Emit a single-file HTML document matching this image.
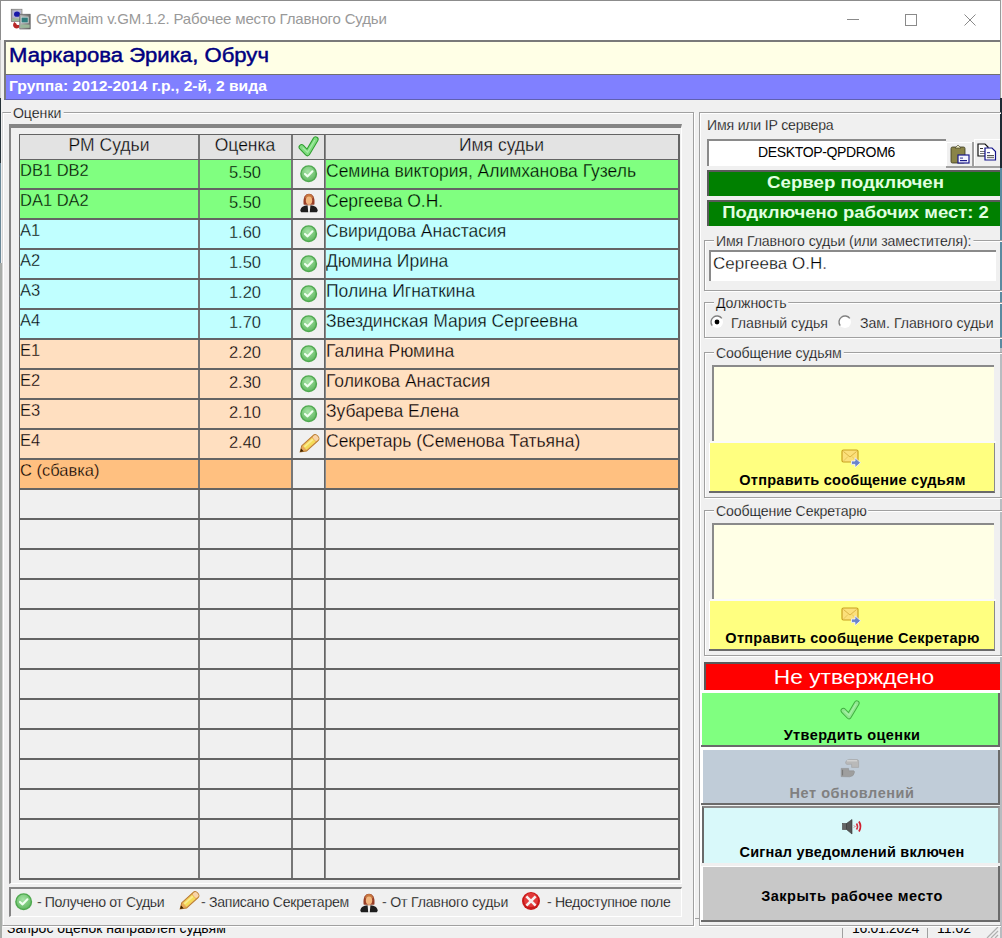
<!DOCTYPE html>
<html><head><meta charset="utf-8">
<style>
*{margin:0;padding:0;box-sizing:border-box}
html,body{width:1002px;height:938px;overflow:hidden;background:#f0f0f0;font-family:"Liberation Sans",sans-serif;color:#000}
.a{position:absolute}
.t{position:absolute;white-space:nowrap;line-height:1}
.c{position:absolute;white-space:nowrap;line-height:1;text-align:center}
svg{position:absolute;overflow:visible}
</style></head><body>
<div class="a" style="left:1000px;top:0px;width:1px;height:98px;background:#9a9a9a"></div>
<div class="a" style="left:1001px;top:0px;width:1px;height:98px;background:#f4f4f4"></div>
<div class="a" style="left:1000px;top:98px;width:2px;height:70px;background:#1e2a34"></div>
<div class="a" style="left:1000px;top:168px;width:2px;height:180px;background:#5a8aa0"></div>
<div class="a" style="left:1000px;top:348px;width:2px;height:590px;background:#b8bcc0"></div>
<div class="a" style="left:0px;top:98px;width:1px;height:65px;background:#263238"></div>
<div class="a" style="left:0px;top:163px;width:1px;height:100px;background:#6a8898"></div>
<div class="a" style="left:0px;top:263px;width:2px;height:675px;background:#a8aca8"></div>
<div class="a" style="left:0px;top:0px;width:1000px;height:40px;background:#fff;border-top:1px solid #8c8c8c;border-left:1px solid #8c8c8c"></div>
<svg style="left:8px;top:6px" width="26" height="26" viewBox="0 0 26 26"><defs><linearGradient id="tg1" x1="0" y1="0" x2="1" y2="0"><stop offset="0" stop-color="#9a9a9a"/><stop offset="1" stop-color="#c8c8c8"/></linearGradient><linearGradient id="tg2" x1="0" y1="0" x2="1" y2="0"><stop offset="0" stop-color="#b8b8b8"/><stop offset="1" stop-color="#6a6a6a"/></linearGradient></defs><rect x="3.2" y="3.2" width="10.8" height="12.4" fill="url(#tg1)" stroke="#707070" stroke-width="0.6"/><rect x="4.4" y="4.6" width="8.6" height="7" fill="#b4b4d4"/><ellipse cx="9" cy="8.2" rx="3" ry="2.6" fill="#1818a8"/><rect x="4" y="12.6" width="9.5" height="2.4" fill="#98b898"/><path d="M6.2 16 Q3.8 19.5 6.4 21.8 Q8.6 23.2 11.2 21.6 L11.2 18.8 Q8.8 19.8 8.2 17.6 Z" fill="#b82828"/><rect x="11.8" y="8.2" width="10.4" height="14.8" fill="url(#tg2)" stroke="#505050" stroke-width="0.6"/><rect x="13" y="10.6" width="7.6" height="6.6" fill="#d0d8d8"/><rect x="13.6" y="11.6" width="6.2" height="4.8" fill="#2e7c7c"/><rect x="12.4" y="18.6" width="9.2" height="3.2" fill="#9ab89a"/></svg>
<div class="t" style="left:36px;top:11px;font-size:15px;color:#999;letter-spacing:-0.17px">GymMaim v.GM.1.2. Рабочее место Главного Судьи</div>
<div class="a" style="left:847px;top:19px;width:12px;height:1px;background:#8a8a8a"></div>
<div class="a" style="left:905px;top:14px;width:12px;height:12px;border:1px solid #8a8a8a"></div>
<svg style="left:964px;top:14px" width="12" height="12"><path d="M0.5 0.5 L11.5 11.5 M11.5 0.5 L0.5 11.5" stroke="#8a8a8a" stroke-width="1"/></svg>
<div class="a" style="left:0px;top:40px;width:1px;height:58px;background:#c8c8c8"></div>
<div class="a" style="left:4px;top:40px;width:996px;height:35px;background:#ffffe6;border-top:2px solid #7a7a7a;border-left:2px solid #7a7a7a;border-bottom:1px solid #707070"></div>
<div class="t" style="left:9px;top:45px;font-size:20px;color:#000080;transform:scaleX(1.105);transform-origin:0 0;-webkit-text-stroke:0.45px #000080">Маркарова Эрика, Обруч</div>
<div class="a" style="left:4px;top:75px;width:996px;height:25px;background:#8080ff;border-left:2px solid #7a7a7a;border-bottom:1px solid #6060b0"></div>
<div class="t" style="left:9px;top:78.2px;font-size:15.5px;font-weight:bold;color:#fff;transform:scaleX(1.01);transform-origin:0 0">Группа: 2012-2014 г.р., 2-й, 2 вида</div>
<div class="a" style="left:2px;top:112px;width:692px;height:814px;border-top:1px solid #a0a0a0;border-left:1px solid #d4d4d4;border-right:1px solid #a0a0a0;border-bottom:1px solid #a0a0a0;box-shadow:inset 1px 1px 0 #fff, 1px 1px 0 #fff"></div>
<div class="t" style="left:11px;top:105.3px;font-size:15px;transform:scaleX(0.94);transform-origin:0 0;-webkit-text-stroke:0.25px #f0f0f0;background:#f0f0f0;padding:0 2px">Оценки</div>
<div class="a" style="left:9px;top:124px;width:673px;height:760px;border-top:4px solid #858585;border-left:2px solid #858585;border-right:1px solid #fff;border-bottom:1px solid #fff"></div>
<div class="a" style="left:19px;top:134px;width:661px;height:745px;background:#f0f0f0"></div>
<div class="a" style="left:19px;top:134px;width:660px;height:25px;background:#e3e3e3"></div>
<div class="a" style="left:19px;top:159px;width:272px;height:30px;background:#80ff80"></div>
<div class="a" style="left:324px;top:159px;width:355px;height:30px;background:#80ff80"></div>
<div class="a" style="left:19px;top:189px;width:272px;height:30px;background:#80ff80"></div>
<div class="a" style="left:324px;top:189px;width:355px;height:30px;background:#80ff80"></div>
<div class="a" style="left:19px;top:219px;width:272px;height:30px;background:#c0ffff"></div>
<div class="a" style="left:324px;top:219px;width:355px;height:30px;background:#c0ffff"></div>
<div class="a" style="left:19px;top:249px;width:272px;height:30px;background:#c0ffff"></div>
<div class="a" style="left:324px;top:249px;width:355px;height:30px;background:#c0ffff"></div>
<div class="a" style="left:19px;top:279px;width:272px;height:30px;background:#c0ffff"></div>
<div class="a" style="left:324px;top:279px;width:355px;height:30px;background:#c0ffff"></div>
<div class="a" style="left:19px;top:309px;width:272px;height:30px;background:#c0ffff"></div>
<div class="a" style="left:324px;top:309px;width:355px;height:30px;background:#c0ffff"></div>
<div class="a" style="left:19px;top:339px;width:272px;height:30px;background:#ffdfc0"></div>
<div class="a" style="left:324px;top:339px;width:355px;height:30px;background:#ffdfc0"></div>
<div class="a" style="left:19px;top:369px;width:272px;height:30px;background:#ffdfc0"></div>
<div class="a" style="left:324px;top:369px;width:355px;height:30px;background:#ffdfc0"></div>
<div class="a" style="left:19px;top:399px;width:272px;height:30px;background:#ffdfc0"></div>
<div class="a" style="left:324px;top:399px;width:355px;height:30px;background:#ffdfc0"></div>
<div class="a" style="left:19px;top:429px;width:272px;height:30px;background:#ffdfc0"></div>
<div class="a" style="left:324px;top:429px;width:355px;height:30px;background:#ffdfc0"></div>
<div class="a" style="left:19px;top:459px;width:272px;height:30px;background:#ffc080"></div>
<div class="a" style="left:324px;top:459px;width:355px;height:30px;background:#ffc080"></div>
<div class="a" style="left:19px;top:134px;width:1px;height:745px;background:#646464"></div>
<div class="a" style="left:198px;top:134px;width:2px;height:745px;background:#767676"></div>
<div class="a" style="left:291px;top:134px;width:2px;height:745px;background:#767676"></div>
<div class="a" style="left:324px;top:134px;width:1px;height:745px;background:#646464"></div>
<div class="a" style="left:325px;top:134px;width:1px;height:745px;background:#8a8a8a"></div>
<div class="a" style="left:678px;top:134px;width:2px;height:745px;background:#646464"></div>
<div class="a" style="left:19px;top:134px;width:661px;height:1px;background:#646464"></div>
<div class="a" style="left:19px;top:159px;width:661px;height:1px;background:#646464"></div>
<div class="a" style="left:19px;top:188px;width:661px;height:2px;background:#646464"></div>
<div class="a" style="left:19px;top:218px;width:661px;height:2px;background:#646464"></div>
<div class="a" style="left:19px;top:248px;width:661px;height:2px;background:#646464"></div>
<div class="a" style="left:19px;top:278px;width:661px;height:2px;background:#646464"></div>
<div class="a" style="left:19px;top:308px;width:661px;height:2px;background:#646464"></div>
<div class="a" style="left:19px;top:338px;width:661px;height:2px;background:#646464"></div>
<div class="a" style="left:19px;top:368px;width:661px;height:2px;background:#646464"></div>
<div class="a" style="left:19px;top:398px;width:661px;height:2px;background:#646464"></div>
<div class="a" style="left:19px;top:428px;width:661px;height:2px;background:#646464"></div>
<div class="a" style="left:19px;top:458px;width:661px;height:2px;background:#646464"></div>
<div class="a" style="left:19px;top:488px;width:661px;height:2px;background:#646464"></div>
<div class="a" style="left:19px;top:518px;width:661px;height:2px;background:#646464"></div>
<div class="a" style="left:19px;top:548px;width:661px;height:2px;background:#646464"></div>
<div class="a" style="left:19px;top:578px;width:661px;height:2px;background:#646464"></div>
<div class="a" style="left:19px;top:608px;width:661px;height:2px;background:#646464"></div>
<div class="a" style="left:19px;top:638px;width:661px;height:2px;background:#646464"></div>
<div class="a" style="left:19px;top:668px;width:661px;height:2px;background:#646464"></div>
<div class="a" style="left:19px;top:698px;width:661px;height:2px;background:#646464"></div>
<div class="a" style="left:19px;top:728px;width:661px;height:2px;background:#646464"></div>
<div class="a" style="left:19px;top:758px;width:661px;height:2px;background:#646464"></div>
<div class="a" style="left:19px;top:788px;width:661px;height:2px;background:#646464"></div>
<div class="a" style="left:19px;top:818px;width:661px;height:2px;background:#646464"></div>
<div class="a" style="left:19px;top:848px;width:661px;height:2px;background:#646464"></div>
<div class="a" style="left:19px;top:878px;width:661px;height:2px;background:#646464"></div>
<div class="c" style="left:19px;top:136.8px;width:180px;font-size:17.5px;-webkit-text-stroke:0.3px #e3e3e3">РМ Судьи</div>
<div class="c" style="left:199px;top:136.8px;width:92px;font-size:17.5px;-webkit-text-stroke:0.3px #e3e3e3">Оценка</div>
<div class="c" style="left:324px;top:136.8px;width:355px;font-size:17.5px;-webkit-text-stroke:0.3px #e3e3e3">Имя судьи</div>
<svg style="left:298px;top:136px" width="21" height="20" viewBox="0 0 21 20"><g transform="scale(1.0)"><path d="M3.6 11.2 L9.4 17.2 L17.6 3.4" fill="none" stroke="#2e9e2e" stroke-width="6" stroke-linecap="round" stroke-linejoin="round"/><path d="M3.6 11.2 L9.4 17.2 L17.6 3.4" fill="none" stroke="#7fdc7f" stroke-width="4" stroke-linecap="round" stroke-linejoin="round"/><path d="M5 12 L9.6 16.2 L16.6 4.5" fill="none" stroke="#b6f4b6" stroke-width="1.2" stroke-linecap="round" opacity="0.7"/></g></svg>
<div class="t" style="left:20px;top:162px;font-size:16.5px;color:#000000;-webkit-text-stroke:0.3px #80ff80">DB1 DB2</div>
<div class="c" style="left:199px;top:164px;width:92px;font-size:16.5px;color:#000000;-webkit-text-stroke:0.3px #80ff80">5.50</div>
<div class="t" style="left:326px;top:162.8px;font-size:17.5px;color:#000000;-webkit-text-stroke:0.3px #80ff80">Семина виктория, Алимханова Гузель</div>
<svg style="left:298.6409090909091px;top:163.8409090909091px" width="19.318181818181817" height="19.318181818181817" viewBox="0 0 20 20"><defs><radialGradient id="gok1" cx="45%" cy="35%" r="65%"><stop offset="0" stop-color="#a6e4a6"/><stop offset="1" stop-color="#66bb66"/></radialGradient></defs><circle cx="10" cy="10" r="8.8" fill="#4fa94f"/><circle cx="10" cy="10" r="7.3" fill="url(#gok1)"/><path d="M6.2 10.3 L8.9 12.8 L13.9 7.6" fill="none" stroke="#f0fff0" stroke-width="2.2" stroke-linecap="round" stroke-linejoin="round"/></svg>
<div class="t" style="left:20px;top:192px;font-size:16.5px;color:#000000;-webkit-text-stroke:0.3px #80ff80">DA1 DA2</div>
<div class="c" style="left:199px;top:194px;width:92px;font-size:16.5px;color:#000000;-webkit-text-stroke:0.3px #80ff80">5.50</div>
<div class="t" style="left:326px;top:192.8px;font-size:17.5px;color:#000000;-webkit-text-stroke:0.3px #80ff80">Сергеева О.Н.</div>
<svg style="left:299.5px;top:193px" width="18" height="20" viewBox="0 0 18 20"><path d="M3.6 11.5 C2.8 4 5.5 0.8 9 0.8 C12.5 0.8 15.2 4 14.4 11.5 C13 12 5 12 3.6 11.5 Z" fill="#9a4028"/><path d="M5 5.5 C5 2.5 7 0.9 9 0.9 C11 0.9 13 2.5 13 5.5 C11.5 4 6.5 4 5 5.5Z" fill="#c87840"/><ellipse cx="9" cy="7.6" rx="3.2" ry="4" fill="#f2b880"/><rect x="7.7" y="10.5" width="2.6" height="2.5" fill="#e4a070"/><path d="M0.3 17.8 C0.5 14.2 3.5 12.6 7.6 12.2 L8.2 19.2 L1.2 19.2Z" fill="#1e1e1e"/><path d="M17.7 17.8 C17.5 14.2 14.5 12.6 10.4 12.2 L9.8 19.2 L16.8 19.2Z" fill="#1e1e1e"/><path d="M7.8 12.6 L10.2 12.6 L9.6 17.5 L8.4 17.5Z" fill="#f0f0f0"/></svg>
<div class="t" style="left:20px;top:222px;font-size:16.5px;color:#000000;-webkit-text-stroke:0.3px #c0ffff">A1</div>
<div class="c" style="left:199px;top:224px;width:92px;font-size:16.5px;color:#000000;-webkit-text-stroke:0.3px #c0ffff">1.60</div>
<div class="t" style="left:326px;top:222.8px;font-size:17.5px;color:#000000;-webkit-text-stroke:0.3px #c0ffff">Свиридова Анастасия</div>
<svg style="left:298.6409090909091px;top:223.8409090909091px" width="19.318181818181817" height="19.318181818181817" viewBox="0 0 20 20"><defs><radialGradient id="gok2" cx="45%" cy="35%" r="65%"><stop offset="0" stop-color="#a6e4a6"/><stop offset="1" stop-color="#66bb66"/></radialGradient></defs><circle cx="10" cy="10" r="8.8" fill="#4fa94f"/><circle cx="10" cy="10" r="7.3" fill="url(#gok2)"/><path d="M6.2 10.3 L8.9 12.8 L13.9 7.6" fill="none" stroke="#f0fff0" stroke-width="2.2" stroke-linecap="round" stroke-linejoin="round"/></svg>
<div class="t" style="left:20px;top:252px;font-size:16.5px;color:#000000;-webkit-text-stroke:0.3px #c0ffff">A2</div>
<div class="c" style="left:199px;top:254px;width:92px;font-size:16.5px;color:#000000;-webkit-text-stroke:0.3px #c0ffff">1.50</div>
<div class="t" style="left:326px;top:252.8px;font-size:17.5px;color:#000000;-webkit-text-stroke:0.3px #c0ffff">Дюмина Ирина</div>
<svg style="left:298.6409090909091px;top:253.8409090909091px" width="19.318181818181817" height="19.318181818181817" viewBox="0 0 20 20"><defs><radialGradient id="gok3" cx="45%" cy="35%" r="65%"><stop offset="0" stop-color="#a6e4a6"/><stop offset="1" stop-color="#66bb66"/></radialGradient></defs><circle cx="10" cy="10" r="8.8" fill="#4fa94f"/><circle cx="10" cy="10" r="7.3" fill="url(#gok3)"/><path d="M6.2 10.3 L8.9 12.8 L13.9 7.6" fill="none" stroke="#f0fff0" stroke-width="2.2" stroke-linecap="round" stroke-linejoin="round"/></svg>
<div class="t" style="left:20px;top:282px;font-size:16.5px;color:#000000;-webkit-text-stroke:0.3px #c0ffff">A3</div>
<div class="c" style="left:199px;top:284px;width:92px;font-size:16.5px;color:#000000;-webkit-text-stroke:0.3px #c0ffff">1.20</div>
<div class="t" style="left:326px;top:282.8px;font-size:17.5px;color:#000000;-webkit-text-stroke:0.3px #c0ffff">Полина Игнаткина</div>
<svg style="left:298.6409090909091px;top:283.84090909090907px" width="19.318181818181817" height="19.318181818181817" viewBox="0 0 20 20"><defs><radialGradient id="gok4" cx="45%" cy="35%" r="65%"><stop offset="0" stop-color="#a6e4a6"/><stop offset="1" stop-color="#66bb66"/></radialGradient></defs><circle cx="10" cy="10" r="8.8" fill="#4fa94f"/><circle cx="10" cy="10" r="7.3" fill="url(#gok4)"/><path d="M6.2 10.3 L8.9 12.8 L13.9 7.6" fill="none" stroke="#f0fff0" stroke-width="2.2" stroke-linecap="round" stroke-linejoin="round"/></svg>
<div class="t" style="left:20px;top:312px;font-size:16.5px;color:#000000;-webkit-text-stroke:0.3px #c0ffff">A4</div>
<div class="c" style="left:199px;top:314px;width:92px;font-size:16.5px;color:#000000;-webkit-text-stroke:0.3px #c0ffff">1.70</div>
<div class="t" style="left:326px;top:312.8px;font-size:17.5px;color:#000000;-webkit-text-stroke:0.3px #c0ffff">Звездинская Мария Сергеевна</div>
<svg style="left:298.6409090909091px;top:313.84090909090907px" width="19.318181818181817" height="19.318181818181817" viewBox="0 0 20 20"><defs><radialGradient id="gok5" cx="45%" cy="35%" r="65%"><stop offset="0" stop-color="#a6e4a6"/><stop offset="1" stop-color="#66bb66"/></radialGradient></defs><circle cx="10" cy="10" r="8.8" fill="#4fa94f"/><circle cx="10" cy="10" r="7.3" fill="url(#gok5)"/><path d="M6.2 10.3 L8.9 12.8 L13.9 7.6" fill="none" stroke="#f0fff0" stroke-width="2.2" stroke-linecap="round" stroke-linejoin="round"/></svg>
<div class="t" style="left:20px;top:342px;font-size:16.5px;color:#000000;-webkit-text-stroke:0.3px #ffdfc0">E1</div>
<div class="c" style="left:199px;top:344px;width:92px;font-size:16.5px;color:#000000;-webkit-text-stroke:0.3px #ffdfc0">2.20</div>
<div class="t" style="left:326px;top:342.8px;font-size:17.5px;color:#000000;-webkit-text-stroke:0.3px #ffdfc0">Галина Рюмина</div>
<svg style="left:298.6409090909091px;top:343.84090909090907px" width="19.318181818181817" height="19.318181818181817" viewBox="0 0 20 20"><defs><radialGradient id="gok6" cx="45%" cy="35%" r="65%"><stop offset="0" stop-color="#a6e4a6"/><stop offset="1" stop-color="#66bb66"/></radialGradient></defs><circle cx="10" cy="10" r="8.8" fill="#4fa94f"/><circle cx="10" cy="10" r="7.3" fill="url(#gok6)"/><path d="M6.2 10.3 L8.9 12.8 L13.9 7.6" fill="none" stroke="#f0fff0" stroke-width="2.2" stroke-linecap="round" stroke-linejoin="round"/></svg>
<div class="t" style="left:20px;top:372px;font-size:16.5px;color:#000000;-webkit-text-stroke:0.3px #ffdfc0">E2</div>
<div class="c" style="left:199px;top:374px;width:92px;font-size:16.5px;color:#000000;-webkit-text-stroke:0.3px #ffdfc0">2.30</div>
<div class="t" style="left:326px;top:372.8px;font-size:17.5px;color:#000000;-webkit-text-stroke:0.3px #ffdfc0">Голикова Анастасия</div>
<svg style="left:298.6409090909091px;top:373.84090909090907px" width="19.318181818181817" height="19.318181818181817" viewBox="0 0 20 20"><defs><radialGradient id="gok7" cx="45%" cy="35%" r="65%"><stop offset="0" stop-color="#a6e4a6"/><stop offset="1" stop-color="#66bb66"/></radialGradient></defs><circle cx="10" cy="10" r="8.8" fill="#4fa94f"/><circle cx="10" cy="10" r="7.3" fill="url(#gok7)"/><path d="M6.2 10.3 L8.9 12.8 L13.9 7.6" fill="none" stroke="#f0fff0" stroke-width="2.2" stroke-linecap="round" stroke-linejoin="round"/></svg>
<div class="t" style="left:20px;top:402px;font-size:16.5px;color:#000000;-webkit-text-stroke:0.3px #ffdfc0">E3</div>
<div class="c" style="left:199px;top:404px;width:92px;font-size:16.5px;color:#000000;-webkit-text-stroke:0.3px #ffdfc0">2.10</div>
<div class="t" style="left:326px;top:402.8px;font-size:17.5px;color:#000000;-webkit-text-stroke:0.3px #ffdfc0">Зубарева Елена</div>
<svg style="left:298.6409090909091px;top:403.84090909090907px" width="19.318181818181817" height="19.318181818181817" viewBox="0 0 20 20"><defs><radialGradient id="gok8" cx="45%" cy="35%" r="65%"><stop offset="0" stop-color="#a6e4a6"/><stop offset="1" stop-color="#66bb66"/></radialGradient></defs><circle cx="10" cy="10" r="8.8" fill="#4fa94f"/><circle cx="10" cy="10" r="7.3" fill="url(#gok8)"/><path d="M6.2 10.3 L8.9 12.8 L13.9 7.6" fill="none" stroke="#f0fff0" stroke-width="2.2" stroke-linecap="round" stroke-linejoin="round"/></svg>
<div class="t" style="left:20px;top:432px;font-size:16.5px;color:#000000;-webkit-text-stroke:0.3px #ffdfc0">E4</div>
<div class="c" style="left:199px;top:434px;width:92px;font-size:16.5px;color:#000000;-webkit-text-stroke:0.3px #ffdfc0">2.40</div>
<div class="t" style="left:326px;top:432.8px;font-size:17.5px;color:#000000;-webkit-text-stroke:0.3px #ffdfc0">Секретарь (Семенова Татьяна)</div>
<svg style="left:297.2px;top:431.9px" width="24" height="24" viewBox="0 0 20 20"><g transform="rotate(-42 10 10)"><path d="M0 10 L4.6 7 L17.2 7 Q19.8 7 19.8 10 Q19.8 13 17.2 13 L4.6 13 Z" fill="#e8aa5c" stroke="#b87c30" stroke-width="0.8"/><rect x="5.2" y="7.8" width="10.2" height="4.4" fill="#f4dc58"/><rect x="5.6" y="8.5" width="9.4" height="1.4" fill="#faf0a0" opacity="0.8"/><path d="M0 10 L2.6 8.4 L2.6 11.6Z" fill="#3a2000"/><rect x="15.8" y="7.6" width="3.6" height="4.8" rx="1.4" fill="#f8d4a8"/></g></svg>
<div class="t" style="left:20px;top:462px;font-size:16.5px;color:#000000;-webkit-text-stroke:0.3px #ffc080">C (сбавка)</div>
<div class="c" style="left:199px;top:464px;width:92px;font-size:16.5px;color:#000000;-webkit-text-stroke:0.3px #ffc080"></div>
<div class="t" style="left:326px;top:462.8px;font-size:17.5px;color:#000000;-webkit-text-stroke:0.3px #ffc080"></div>
<div class="a" style="left:9px;top:887px;width:673px;height:30px;border-top:2px solid #858585;border-left:2px solid #858585;border-right:1px solid #fff;border-bottom:1px solid #fff"></div>
<svg style="left:13.840909090909092px;top:891.8409090909091px" width="19.318181818181817" height="19.318181818181817" viewBox="0 0 20 20"><defs><radialGradient id="gok9" cx="45%" cy="35%" r="65%"><stop offset="0" stop-color="#a6e4a6"/><stop offset="1" stop-color="#66bb66"/></radialGradient></defs><circle cx="10" cy="10" r="8.8" fill="#4fa94f"/><circle cx="10" cy="10" r="7.3" fill="url(#gok9)"/><path d="M6.2 10.3 L8.9 12.8 L13.9 7.6" fill="none" stroke="#f0fff0" stroke-width="2.2" stroke-linecap="round" stroke-linejoin="round"/></svg>
<div class="t" style="left:37px;top:894.3px;font-size:15px;transform:scaleX(0.94);transform-origin:0 0;-webkit-text-stroke:0.25px #f0f0f0;letter-spacing:-0.4px">- Получено от Судьи</div>
<svg style="left:177.2px;top:889.3px" width="24" height="24" viewBox="0 0 20 20"><g transform="rotate(-42 10 10)"><path d="M0 10 L4.6 7 L17.2 7 Q19.8 7 19.8 10 Q19.8 13 17.2 13 L4.6 13 Z" fill="#e8aa5c" stroke="#b87c30" stroke-width="0.8"/><rect x="5.2" y="7.8" width="10.2" height="4.4" fill="#f4dc58"/><rect x="5.6" y="8.5" width="9.4" height="1.4" fill="#faf0a0" opacity="0.8"/><path d="M0 10 L2.6 8.4 L2.6 11.6Z" fill="#3a2000"/><rect x="15.8" y="7.6" width="3.6" height="4.8" rx="1.4" fill="#f8d4a8"/></g></svg>
<div class="t" style="left:201px;top:894.3px;font-size:15px;transform:scaleX(0.94);transform-origin:0 0;-webkit-text-stroke:0.25px #f0f0f0;letter-spacing:-0.3px">- Записано Секретарем</div>
<svg style="left:359.5px;top:892.5px" width="18" height="20" viewBox="0 0 18 20"><path d="M3.6 11.5 C2.8 4 5.5 0.8 9 0.8 C12.5 0.8 15.2 4 14.4 11.5 C13 12 5 12 3.6 11.5 Z" fill="#9a4028"/><path d="M5 5.5 C5 2.5 7 0.9 9 0.9 C11 0.9 13 2.5 13 5.5 C11.5 4 6.5 4 5 5.5Z" fill="#c87840"/><ellipse cx="9" cy="7.6" rx="3.2" ry="4" fill="#f2b880"/><rect x="7.7" y="10.5" width="2.6" height="2.5" fill="#e4a070"/><path d="M0.3 17.8 C0.5 14.2 3.5 12.6 7.6 12.2 L8.2 19.2 L1.2 19.2Z" fill="#1e1e1e"/><path d="M17.7 17.8 C17.5 14.2 14.5 12.6 10.4 12.2 L9.8 19.2 L16.8 19.2Z" fill="#1e1e1e"/><path d="M7.8 12.6 L10.2 12.6 L9.6 17.5 L8.4 17.5Z" fill="#f0f0f0"/></svg>
<div class="t" style="left:382px;top:894.3px;font-size:15px;transform:scaleX(0.94);transform-origin:0 0;-webkit-text-stroke:0.25px #f0f0f0;letter-spacing:-0.2px">- От Главного судьи</div>
<svg style="left:521.0px;top:891.4px" width="20.0" height="20.0" viewBox="0 0 20 20"><circle cx="10" cy="10" r="9" fill="#c81818"/><circle cx="10" cy="9" r="7" fill="#e23a3a"/><path d="M6.3 6.3 L13.7 13.7 M13.7 6.3 L6.3 13.7" stroke="#f6f0f0" stroke-width="2.6" stroke-linecap="square"/></svg>
<div class="t" style="left:547px;top:894.3px;font-size:15px;transform:scaleX(0.94);transform-origin:0 0;-webkit-text-stroke:0.25px #f0f0f0;letter-spacing:-0.35px">- Недоступное поле</div>
<div class="a" style="left:1px;top:928px;width:999px;height:10px;overflow:hidden"><div class="t" style="left:6px;top:-7px;font-size:14px">Запрос оценок направлен судьям</div><div class="t" style="left:851px;top:-7px;font-size:14px;letter-spacing:-0.3px">16.01.2024</div><div class="t" style="left:936px;top:-7px;font-size:14px">11:02</div><div class="a" style="left:841px;top:0;width:1px;height:11px;background:#a0a0a0"></div><div class="a" style="left:926px;top:0;width:1px;height:11px;background:#a0a0a0"></div></div>
<svg style="left:985px;top:926px" width="14" height="12"><path d="M13 1 L2 12 M13 5 L6 12 M13 9 L10 12" stroke="#b0b0b0" stroke-width="1.2"/></svg>
<div class="a" style="left:699px;top:112px;width:302px;height:814px;border-top:1px solid #a0a0a0;border-left:1px solid #a0a0a0;border-bottom:1px solid #a0a0a0;box-shadow:inset 1px 1px 0 #fff, 0 1px 0 #fff"></div>
<div class="a" style="left:695px;top:918px;width:4px;height:1px;background:#a0a0a0"></div>
<div class="t" style="left:707px;top:117.3px;font-size:15px;transform:scaleX(0.94);transform-origin:0 0;-webkit-text-stroke:0.25px #f0f0f0;letter-spacing:-0.2px">Имя или IP сервера</div>
<div class="a" style="left:707px;top:139px;width:239px;height:27px;background:#fff;border-top:2px solid #8a8a8a;border-left:2px solid #8a8a8a"></div>
<div class="c" style="left:707px;top:145px;width:239px;font-size:14px;letter-spacing:-0.35px">DESKTOP-QPDROM6</div>
<div class="a" style="left:946px;top:142px;width:28px;height:26px;background:#f0f0f0;border-right:2px solid #a0a0a0;border-bottom:2px solid #a0a0a0;box-shadow:inset 1px 1px 0 #fff"></div>
<svg style="left:950px;top:144px" width="20" height="20" viewBox="0 0 20 20"><rect x="1" y="3" width="14" height="16" rx="1.5" fill="#8a8448" stroke="#3a3820" stroke-width="0.8"/><path d="M5 4 L8 1 L11 4 Z" fill="#f0eec8" stroke="#3a3820" stroke-width="0.6"/><rect x="8" y="11" width="11" height="8" fill="#f4f4ff" stroke="#1a1a8a" stroke-width="1.2"/><rect x="10" y="13.5" width="3" height="1.2" fill="#5050a0"/><rect x="10" y="16" width="7" height="1.2" fill="#1a1a8a"/></svg>
<div class="a" style="left:974px;top:139px;width:26px;height:29px;background:#f0f0f0;border-bottom:2px solid #a0a0a0;box-shadow:inset 1px 1px 0 #fff"></div>
<svg style="left:977px;top:143px" width="20" height="19" viewBox="0 0 20 19"><path d="M1 1 L8 1 L11 4 L11 13 L1 13 Z" fill="#fff" stroke="#111" stroke-width="1.2"/><rect x="3" y="5" width="3" height="1" fill="#333"/><rect x="3" y="8" width="6" height="1" fill="#777"/><rect x="3" y="10" width="6" height="1" fill="#777"/><path d="M8 5 L15 5 L18.5 8.5 L18.5 17 L8 17 Z" fill="#fff" stroke="#10108a" stroke-width="1.2"/><rect x="10" y="9" width="3" height="1.2" fill="#5050a0"/><rect x="10" y="12" width="7" height="1.2" fill="#555"/><rect x="10" y="14" width="7" height="1.2" fill="#777"/></svg>
<div class="a" style="left:707px;top:170px;width:293px;height:26px;background:#008000;border-top:2px solid #5a5a5a;border-left:2px solid #5a5a5a"></div>
<div class="c" style="left:709px;top:175px;width:293px;font-size:16px;font-weight:bold;color:#e0ffe0;transform:scaleX(1.166)">Сервер подключен</div>
<div class="a" style="left:707px;top:200px;width:293px;height:26px;background:#008000;border-top:2px solid #5a5a5a;border-left:2px solid #5a5a5a"></div>
<div class="c" style="left:709px;top:205px;width:293px;font-size:16px;font-weight:bold;color:#e0ffe0;transform:scaleX(1.154)">Подключено рабочих мест: 2</div>
<div class="a" style="left:704px;top:240px;width:300px;height:51px;border:1px solid #a0a0a0;box-shadow:inset 1px 1px 0 #fff, 1px 1px 0 #fff"></div>
<div class="t" style="left:714px;top:233.3px;font-size:15px;transform:scaleX(0.94);transform-origin:0 0;-webkit-text-stroke:0.25px #f0f0f0;background:#f0f0f0;padding:0 2px;letter-spacing:-0.1px">Имя Главного судьи (или заместителя):</div>
<div class="a" style="left:709px;top:250px;width:287px;height:31px;background:#fff;border-top:2px solid #8a8a8a;border-left:2px solid #8a8a8a"></div>
<div class="t" style="left:713px;top:255px;font-size:17px;-webkit-text-stroke:0.3px #fff">Сергеева О.Н.</div>
<div class="a" style="left:704px;top:302px;width:300px;height:36px;border:1px solid #a0a0a0;box-shadow:inset 1px 1px 0 #fff, 1px 1px 0 #fff"></div>
<div class="t" style="left:714px;top:295.3px;font-size:15px;transform:scaleX(0.94);transform-origin:0 0;-webkit-text-stroke:0.25px #f0f0f0;background:#f0f0f0;padding:0 2px;letter-spacing:-0.1px">Должность</div>
<svg style="left:710.2px;top:315.4px" width="14" height="14" viewBox="0 0 14 14"><circle cx="7" cy="7" r="6" fill="#fff"/><path d="M2.2 10.6 A6 6 0 0 1 11.8 3.4" fill="none" stroke="#808080" stroke-width="1.4"/><circle cx="7" cy="7" r="2.4" fill="#000"/></svg>
<div class="t" style="left:731px;top:314.6px;font-size:15px;transform:scaleX(0.94);transform-origin:0 0;-webkit-text-stroke:0.25px #f0f0f0">Главный судья</div>
<svg style="left:837.8px;top:315.2px" width="14" height="14" viewBox="0 0 14 14"><circle cx="7" cy="7" r="6" fill="#fff"/><path d="M2.2 10.6 A6 6 0 0 1 11.8 3.4" fill="none" stroke="#808080" stroke-width="1.4"/></svg>
<div class="t" style="left:860px;top:314.6px;font-size:15px;transform:scaleX(0.94);transform-origin:0 0;-webkit-text-stroke:0.25px #f0f0f0">Зам. Главного судьи</div>
<div class="a" style="left:704px;top:352px;width:300px;height:146px;border:1px solid #a0a0a0;box-shadow:inset 1px 1px 0 #fff, 1px 1px 0 #fff"></div>
<div class="t" style="left:714px;top:345.3px;font-size:15px;transform:scaleX(0.94);transform-origin:0 0;-webkit-text-stroke:0.25px #f0f0f0;background:#f0f0f0;padding:0 2px;letter-spacing:-0.1px">Сообщение судьям</div>
<div class="a" style="left:712px;top:365px;width:282px;height:76px;background:#ffffe6;border-top:2px solid #8a8a8a;border-left:2px solid #8a8a8a"></div>
<div class="a" style="left:710px;top:441px;width:286px;height:2px;background:#fafafa"></div>
<div class="a" style="left:709px;top:443px;width:286px;height:50px;background:#ffff80;border-bottom:2px solid #6a6a6a;border-right:1px solid #8a8a8a;box-shadow:inset 1px 0 0 #fff"></div>
<svg style="left:841px;top:449px" width="20" height="18" viewBox="0 0 20 18"><rect x="1" y="1" width="16" height="12" rx="1.5" fill="#fce07a" stroke="#c8a020" stroke-width="1.2"/><path d="M2.5 2.5 L9 8 L15.5 2.5" fill="none" stroke="#d0a838" stroke-width="0.8"/><path d="M2.5 12 L7 7.5 M15.5 12 L11 7.5" fill="none" stroke="#d8b848" stroke-width="0.6"/><path d="M10.5 12 L14 12 L14 8.8 L19.5 13.7 L14 18.6 L14 15.4 L10.5 15.4 Z" fill="#6a84cc" stroke="#f8f8ff" stroke-width="0.8"/></svg>
<div class="c" style="left:710px;top:473px;width:285px;font-size:14.5px;font-weight:bold;letter-spacing:0.25px">Отправить сообщение судьям</div>
<div class="a" style="left:704px;top:510px;width:300px;height:146px;border:1px solid #a0a0a0;box-shadow:inset 1px 1px 0 #fff, 1px 1px 0 #fff"></div>
<div class="t" style="left:714px;top:503.3px;font-size:15px;transform:scaleX(0.94);transform-origin:0 0;-webkit-text-stroke:0.25px #f0f0f0;background:#f0f0f0;padding:0 2px;letter-spacing:-0.1px">Сообщение Секретарю</div>
<div class="a" style="left:712px;top:523px;width:282px;height:76px;background:#ffffe6;border-top:2px solid #8a8a8a;border-left:2px solid #8a8a8a"></div>
<div class="a" style="left:710px;top:599px;width:286px;height:2px;background:#fafafa"></div>
<div class="a" style="left:709px;top:601px;width:286px;height:50px;background:#ffff80;border-bottom:2px solid #6a6a6a;border-right:1px solid #8a8a8a;box-shadow:inset 1px 0 0 #fff"></div>
<svg style="left:841px;top:607px" width="20" height="18" viewBox="0 0 20 18"><rect x="1" y="1" width="16" height="12" rx="1.5" fill="#fce07a" stroke="#c8a020" stroke-width="1.2"/><path d="M2.5 2.5 L9 8 L15.5 2.5" fill="none" stroke="#d0a838" stroke-width="0.8"/><path d="M2.5 12 L7 7.5 M15.5 12 L11 7.5" fill="none" stroke="#d8b848" stroke-width="0.6"/><path d="M10.5 12 L14 12 L14 8.8 L19.5 13.7 L14 18.6 L14 15.4 L10.5 15.4 Z" fill="#6a84cc" stroke="#f8f8ff" stroke-width="0.8"/></svg>
<div class="c" style="left:710px;top:631px;width:285px;font-size:14.5px;font-weight:bold;letter-spacing:0.3px">Отправить сообщение Секретарю</div>
<div class="a" style="left:704px;top:662px;width:296px;height:29px;background:#ff0000;border-top:2px solid #5a5a5a;border-left:2px solid #5a5a5a"></div>
<div class="c" style="left:706px;top:667px;width:296px;font-size:20px;color:#fff;transform:scaleX(1.135)">Не утверждено</div>
<div class="a" style="left:701px;top:690px;width:299px;height:3px;background:#fff"></div>
<div class="a" style="left:701px;top:693px;width:299px;height:54px;background:#80ff80;border-bottom:2px solid #6a6a6a;border-right:2px solid #6a6a6a;box-shadow:inset 1px 0 0 #fff"></div>
<svg style="left:840px;top:700px" width="20" height="20" viewBox="0 0 20 20"><g transform="scale(0.9523809523809523)"><path d="M3.6 11.2 L9.4 17.2 L17.6 3.4" fill="none" stroke="#3fae3f" stroke-width="6" stroke-linecap="round" stroke-linejoin="round"/><path d="M3.6 11.2 L9.4 17.2 L17.6 3.4" fill="none" stroke="#8ee88e" stroke-width="4" stroke-linecap="round" stroke-linejoin="round"/><path d="M5 12 L9.6 16.2 L16.6 4.5" fill="none" stroke="#b6f4b6" stroke-width="1.2" stroke-linecap="round" opacity="0.7"/></g></svg>
<div class="c" style="left:704px;top:728px;width:296px;font-size:14.5px;font-weight:bold;letter-spacing:0.4px">Утвердить оценки</div>
<div class="a" style="left:701px;top:747px;width:299px;height:3px;background:#fff"></div>
<div class="a" style="left:701px;top:750px;width:299px;height:55px;background:#c0ccd8;border-bottom:2px solid #6a6a6a;border-right:2px solid #6a6a6a;box-shadow:inset 2px 0 0 #fff"></div>
<svg style="left:836px;top:754px" width="28" height="28" viewBox="0 0 28 28"><path d="M9.6 8 Q10.5 5.6 13.5 5.4 L21.2 5.6 Q22.6 5.8 22.6 7.4 L22.6 13.4 L15.6 13.4 L15.6 10.2 L11 10.4 Q9.4 10.2 9.6 8 Z" fill="#b9b9b9" stroke="#9c9c9c" stroke-width="0.5"/><path d="M11 6.8 L21 6.8" stroke="#dcdcdc" stroke-width="1"/><path d="M5.2 14.4 L12.6 14.4 L12.8 16.8 L17.8 16.8 Q18.6 17 18.4 18.6 Q17.8 22.6 13.6 22.8 L5.2 22.6 Z" fill="#9e9e9e" stroke="#888" stroke-width="0.5"/><path d="M6.6 15.8 L6.6 21.4" stroke="#777" stroke-width="1"/></svg>
<div class="c" style="left:704px;top:786px;width:296px;font-size:14.5px;font-weight:bold;color:#808080;letter-spacing:0.55px">Нет обновлений</div>
<div class="a" style="left:702px;top:806px;width:298px;height:57px;background:#d9f9fa;border-left:2px solid #6a6a6a;border-top:2px solid #8a8a8a;border-right:2px solid #a0a0a0;box-shadow:-2px 0 0 #fff"></div>
<svg style="left:842px;top:819px" width="21" height="16" viewBox="0 0 21 16"><rect x="0.5" y="4.5" width="4" height="6" fill="#666" stroke="#444" stroke-width="0.6"/><path d="M4.5 4.5 L10 0.5 L10 15 L4.5 10.5 Z" fill="#555" stroke="#333" stroke-width="0.6"/><path d="M12 6.5 L13 7.5 L12 8.5" fill="none" stroke="#d05050" stroke-width="1"/><path d="M14.5 4.5 Q16.5 7.5 14.5 10.5" fill="none" stroke="#d83040" stroke-width="1.6"/><path d="M17 2.5 Q20 7.5 17 12.5" fill="none" stroke="#d02030" stroke-width="1.8"/></svg>
<div class="c" style="left:704px;top:845px;width:296px;font-size:14.5px;font-weight:bold;letter-spacing:0.22px">Сигнал уведомлений включен</div>
<div class="a" style="left:701px;top:866px;width:299px;height:56px;background:#c8c8c8;border-bottom:2px solid #6a6a6a;border-right:2px solid #6a6a6a;box-shadow:inset 2px 1px 0 #fff"></div>
<div class="c" style="left:704px;top:889px;width:296px;font-size:14.5px;font-weight:bold;letter-spacing:0.5px">Закрыть рабочее место</div>
</body></html>
